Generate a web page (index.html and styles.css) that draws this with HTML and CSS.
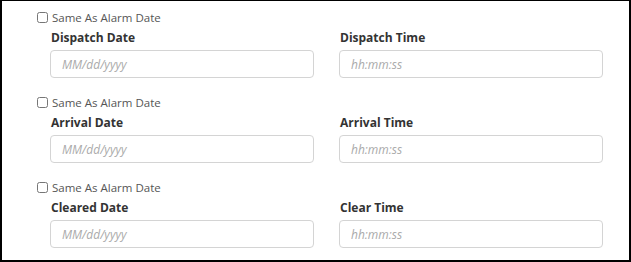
FILE: index.html
```html
<!DOCTYPE html>
<html lang="en">
<head>
    <meta charset="UTF-8">
    <meta name="viewport" content="width=device-width, initial-scale=1.0">
    <title>Incident Times</title>
    <link rel="stylesheet" href="styles.css">
</head>
<body>
    <div class="panel">
        <!-- Dispatch -->
        <div class="group">
            <label class="same"><input type="checkbox"> Same As Alarm Date</label>
            <div class="fields">
                <div class="field">
                    <div class="label">Dispatch Date</div>
                    <input type="text" class="box" placeholder="MM/dd/yyyy">
                </div>
                <div class="field">
                    <div class="label">Dispatch Time</div>
                    <input type="text" class="box" placeholder="hh:mm:ss">
                </div>
            </div>
        </div>

        <!-- Arrival -->
        <div class="group">
            <label class="same"><input type="checkbox"> Same As Alarm Date</label>
            <div class="fields">
                <div class="field">
                    <div class="label">Arrival Date</div>
                    <input type="text" class="box" placeholder="MM/dd/yyyy">
                </div>
                <div class="field">
                    <div class="label">Arrival Time</div>
                    <input type="text" class="box" placeholder="hh:mm:ss">
                </div>
            </div>
        </div>

        <!-- Cleared -->
        <div class="group">
            <label class="same"><input type="checkbox"> Same As Alarm Date</label>
            <div class="fields">
                <div class="field">
                    <div class="label">Cleared Date</div>
                    <input type="text" class="box" placeholder="MM/dd/yyyy">
                </div>
                <div class="field">
                    <div class="label">Clear Time</div>
                    <input type="text" class="box" placeholder="hh:mm:ss">
                </div>
            </div>
        </div>
    </div>
</body>
</html>
```

FILE: styles.css
```css
body {
    margin: 0;
    font-family: "Open Sans", Arial, sans-serif;
    background-color: #fff;
}
.panel {
    box-sizing: border-box;
    width: 631px;
    height: 262px;
    border: 2px solid #000;
    border-top-width: 1px;
    padding-top: 8px;
    display: flex;
    flex-direction: column;
    gap: 16px;
}
.group {
    display: flex;
    flex-direction: column;
}
.same {
    display: flex;
    align-items: center;
    height: 17px;
    padding-left: 35px;
    font-size: 11.5px;
    color: #555;
}
.same input {
    width: 11px;
    height: 11px;
    margin: 0 4px 0 0;
}
.fields {
    display: grid;
    grid-template-columns: 264px 264px;
    column-gap: 25px;
    margin-left: 48px;
    margin-top: 3px;
}
.label {
    font-size: 12px;
    line-height: 17px;
    font-weight: bold;
    color: #333;
    padding-left: 1px;
}
.box {
    box-sizing: border-box;
    width: 100%;
    height: 28px;
    margin: 4px 0 0;
    padding: 0 11px;
    border: 1px solid #d4d4d4;
    border-radius: 4px;
    font-family: "Open Sans", Arial, sans-serif;
    font-size: 12px;
}
.box::placeholder {
    color: #aaa;
    font-style: italic;
}
```
